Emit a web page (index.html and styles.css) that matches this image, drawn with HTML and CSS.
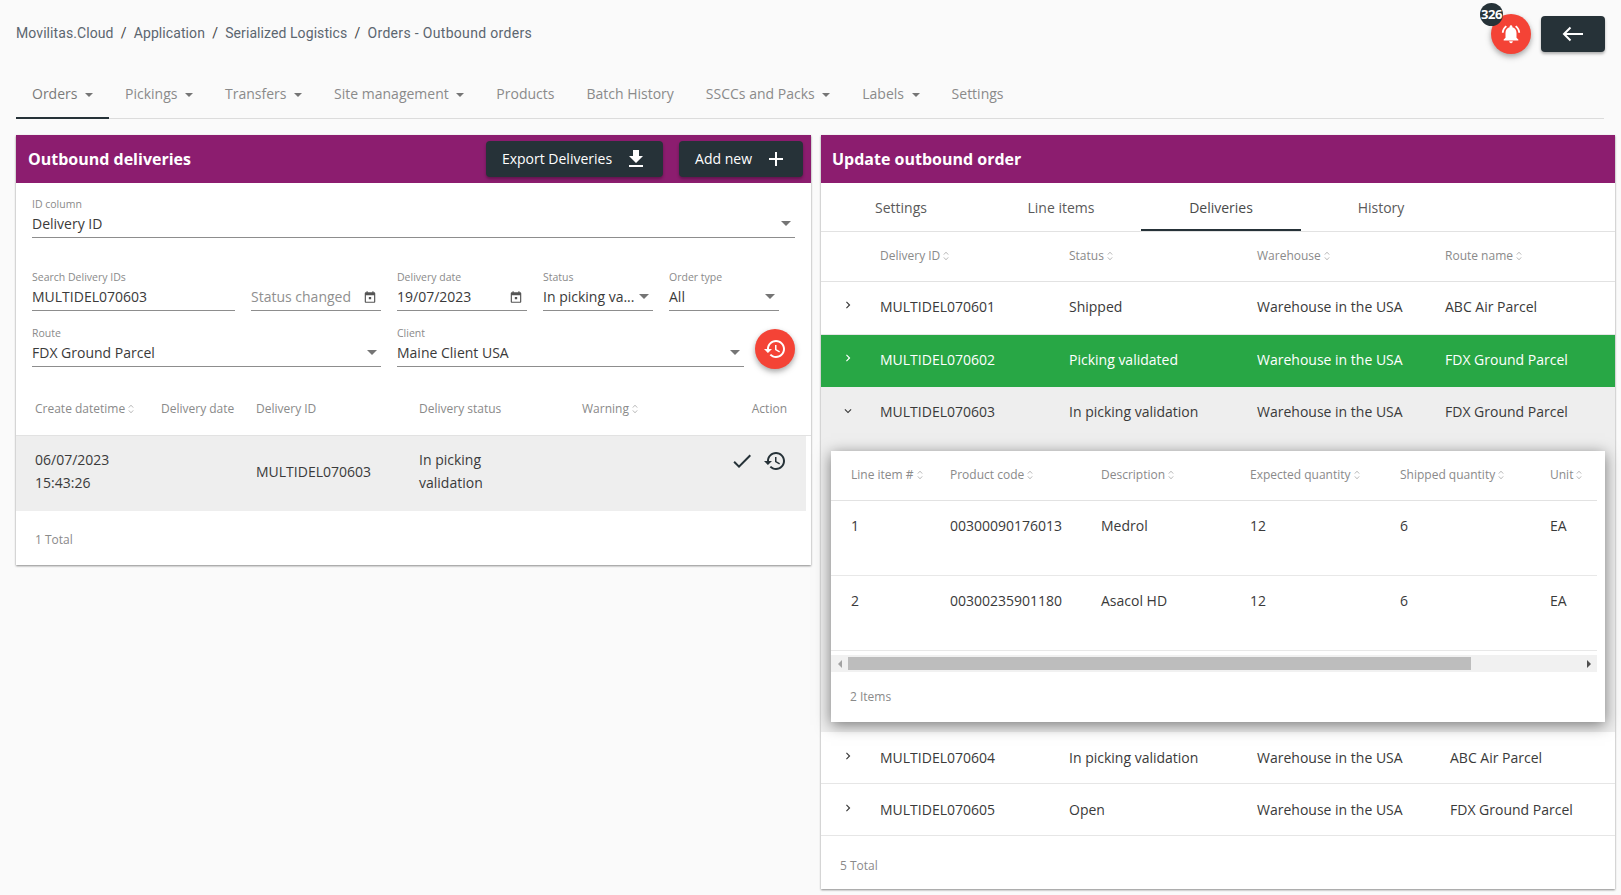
FILE: index.html
```html
<!DOCTYPE html>
<html lang="en">
<head>
<meta charset="utf-8">
<title>Orders - Outbound orders</title>
<link rel="stylesheet" href="styles.css">
</head>
<body>
<svg class="defs" width="0" height="0" aria-hidden="true">
  <symbol id="i-download" viewBox="0 0 24 24"><path d="M19 9h-4V3H9v6H5l7 7 7-7zM5 18v2h14v-2H5z"/></symbol>
  <symbol id="i-add" viewBox="0 0 24 24"><path d="M19 13h-6v6h-2v-6H5v-2h6V5h2v6h6v2z"/></symbol>
  <symbol id="i-history" viewBox="0 0 24 24"><path d="M13 3c-4.97 0-9 4.03-9 9H1l3.89 3.89.07.14L9 12H6c0-3.87 3.13-7 7-7s7 3.13 7 7-3.13 7-7 7c-1.93 0-3.68-.79-4.94-2.06l-1.42 1.42C8.27 19.99 10.51 21 13 21c4.97 0 9-4.03 9-9s-4.03-9-9-9zm-1 5v5l4.28 2.54.72-1.21-3.5-2.08V8H12z"/></symbol>
  <symbol id="i-check" viewBox="0 0 24 24"><path d="M9 16.17L4.83 12l-1.42 1.41L9 19 21 7l-1.41-1.41z"/></symbol>
  <symbol id="i-back" viewBox="0 0 24 24"><path d="M22 12H3M9.5 5.5L3 12l6.5 6.5" fill="none" stroke="currentColor" stroke-width="2"/></symbol>
  <symbol id="i-bell" viewBox="0 0 24 24"><path d="M7.58 4.08L6.15 2.65C3.75 4.48 2.17 7.3 2.03 10.5h2c.15-2.65 1.51-4.97 3.55-6.42zm12.39 6.42h2c-.15-3.2-1.73-6.02-4.12-7.85l-1.42 1.43c2.02 1.45 3.39 3.77 3.54 6.42zM18 11c0-3.07-1.64-5.64-4.5-6.32V4c0-.83-.67-1.5-1.5-1.5s-1.5.67-1.5 1.5v.68C7.63 5.36 6 7.92 6 11v5l-2 2v1h16v-1l-2-2v-5zm-6 11c.14 0 .27-.01.4-.04.65-.14 1.18-.58 1.44-1.18.1-.24.15-.5.15-.78h-4c.01 1.1.9 2 2.01 2z"/></symbol>
  <symbol id="i-event" viewBox="0 0 24 24"><path d="M19 4h-1V2h-2v2H8V2H6v2H5c-1.11 0-1.99.9-1.99 2L3 20c0 1.1.89 2 2 2h14c1.1 0 2-.9 2-2V6c0-1.1-.9-2-2-2zm0 16H5V9h14v11zM10 12h4v4h-4z"/></symbol>
  <symbol id="i-right" viewBox="0 0 24 24"><path d="M10 6L8.59 7.41 13.17 12l-4.58 4.59L10 18l6-6z"/></symbol>
  <symbol id="i-down" viewBox="0 0 24 24"><path d="M16.59 8.59L12 13.17 7.41 8.59 6 10l6 6 6-6z"/></symbol>
  <symbol id="i-sort" viewBox="0 0 6 10"><path d="M.8 3.6L3 1.2l2.2 2.4M.8 6.4L3 8.8l2.2-2.4" fill="none" stroke="currentColor" stroke-width=".9"/></symbol>
</svg>

<header class="topbar">
  <nav class="crumbs">
    <span>Movilitas.Cloud</span><i>/</i><span>Application</span><i>/</i><span>Serialized Logistics</span><i>/</i><span class="crumb-last">Orders - Outbound orders</span>
  </nav>
  <div class="top-actions">
    <div class="bell-wrap">
      <span class="badge">326</span>
      <button class="fab"><svg class="ic-22"><use href="#i-bell"/></svg></button>
    </div>
    <button class="back"><svg class="ic-24"><use href="#i-back"/></svg></button>
  </div>
</header>

<nav class="mainnav">
  <a class="nav-item active">Orders<b class="caret"></b></a>
  <a class="nav-item">Pickings<b class="caret"></b></a>
  <a class="nav-item">Transfers<b class="caret"></b></a>
  <a class="nav-item">Site management<b class="caret"></b></a>
  <a class="nav-item">Products</a>
  <a class="nav-item">Batch History</a>
  <a class="nav-item">SSCCs and Packs<b class="caret"></b></a>
  <a class="nav-item">Labels<b class="caret"></b></a>
  <a class="nav-item">Settings</a>
</nav>

<main class="panels">
  <section class="panel panel-left">
    <div class="panel-head">
      <h2>Outbound deliveries</h2>
      <div class="head-actions">
        <button class="btn">Export Deliveries<svg class="ic-24"><use href="#i-download"/></svg></button>
        <button class="btn">Add new<svg class="ic-24"><use href="#i-add"/></svg></button>
      </div>
    </div>

    <div class="form">
      <div class="form-row r1">
        <div class="field f-full"><label>ID column</label><div class="val">Delivery ID<b class="arrow"></b></div></div>
      </div>
      <div class="form-row r2">
        <div class="field f-search"><label>Search Delivery IDs</label><div class="val">MULTIDEL070603</div></div>
        <div class="field f-date"><label>&nbsp;</label><div class="val muted">Status changed<svg class="ic-cal"><use href="#i-event"/></svg></div></div>
        <div class="field f-date"><label>Delivery date</label><div class="val">19/07/2023<svg class="ic-cal"><use href="#i-event"/></svg></div></div>
        <div class="field f-small"><label>Status</label><div class="val">In picking va...<b class="arrow"></b></div></div>
        <div class="field f-small"><label>Order type</label><div class="val">All<b class="arrow"></b></div></div>
      </div>
      <div class="form-row r3">
        <div class="field f-route"><label>Route</label><div class="val">FDX Ground Parcel<b class="arrow"></b></div></div>
        <div class="field f-client"><label>Client</label><div class="val">Maine Client USA<b class="arrow"></b></div></div>
        <button class="fab fab-form"><svg class="ic-24"><use href="#i-history"/></svg></button>
      </div>
    </div>

    <div class="lt-row lt-head">
      <span>Create datetime<svg class="sort"><use href="#i-sort"/></svg></span>
      <span>Delivery date</span>
      <span>Delivery ID</span>
      <span>Delivery status</span>
      <span>Warning<svg class="sort"><use href="#i-sort"/></svg></span>
      <span class="end">Action</span>
    </div>
    <div class="lt-row lt-data">
      <span>06/07/2023<br>15:43:26</span>
      <span></span>
      <span>MULTIDEL070603</span>
      <span>In picking<br>validation</span>
      <span></span>
      <span class="row-actions">
        <svg class="ic-24"><use href="#i-check"/></svg>
        <svg class="ic-24"><use href="#i-history"/></svg>
      </span>
    </div>
    <div class="foot foot-left">1 Total</div>
  </section>

  <section class="panel panel-right">
    <div class="panel-head"><h2>Update outbound order</h2></div>
    <div class="tabs">
      <a class="tab">Settings</a>
      <a class="tab">Line items</a>
      <a class="tab active">Deliveries</a>
      <a class="tab">History</a>
    </div>

    <div class="rt-row rt-head">
      <span></span>
      <span>Delivery ID<svg class="sort"><use href="#i-sort"/></svg></span>
      <span>Status<svg class="sort"><use href="#i-sort"/></svg></span>
      <span>Warehouse<svg class="sort"><use href="#i-sort"/></svg></span>
      <span>Route name<svg class="sort"><use href="#i-sort"/></svg></span>
    </div>
    <div class="rt-row rt-data shipped">
      <svg class="chev"><use href="#i-right"/></svg>
      <span>MULTIDEL070601</span><span>Shipped</span><span>Warehouse in the USA</span><span>ABC Air Parcel</span>
    </div>
    <div class="rt-row rt-data green">
      <svg class="chev"><use href="#i-right"/></svg>
      <span>MULTIDEL070602</span><span>Picking validated</span><span>Warehouse in the USA</span><span>FDX Ground Parcel</span>
    </div>
    <div class="rt-row rt-data open">
      <svg class="chev"><use href="#i-down"/></svg>
      <span>MULTIDEL070603</span><span>In picking validation</span><span>Warehouse in the USA</span><span>FDX Ground Parcel</span>
    </div>

    <div class="expansion">
      <div class="card">
        <div class="nt-row nt-head">
          <span>Line item #<svg class="sort"><use href="#i-sort"/></svg></span>
          <span>Product code<svg class="sort"><use href="#i-sort"/></svg></span>
          <span>Description<svg class="sort"><use href="#i-sort"/></svg></span>
          <span>Expected quantity<svg class="sort"><use href="#i-sort"/></svg></span>
          <span>Shipped quantity<svg class="sort"><use href="#i-sort"/></svg></span>
          <span>Unit<svg class="sort"><use href="#i-sort"/></svg></span>
        </div>
        <div class="nt-row nt-data">
          <span>1</span><span>00300090176013</span><span>Medrol</span><span>12</span><span>6</span><span>EA</span>
        </div>
        <div class="nt-row nt-data">
          <span>2</span><span>00300235901180</span><span>Asacol HD</span><span>12</span><span>6</span><span>EA</span>
        </div>
        <div class="scrollbar">
          <b class="sb-left"></b>
          <div class="sb-track"><div class="sb-thumb"></div></div>
          <b class="sb-right"></b>
        </div>
        <div class="foot foot-card">2 Items</div>
      </div>
    </div>

    <div class="rt-row rt-data after">
      <svg class="chev"><use href="#i-right"/></svg>
      <span>MULTIDEL070604</span><span>In picking validation</span><span>Warehouse in the USA</span><span>ABC Air Parcel</span>
    </div>
    <div class="rt-row rt-data after">
      <svg class="chev"><use href="#i-right"/></svg>
      <span>MULTIDEL070605</span><span>Open</span><span>Warehouse in the USA</span><span>FDX Ground Parcel</span>
    </div>
    <div class="foot foot-right">5 Total</div>
  </section>
</main>
</body>
</html>
```

FILE: styles.css
```css
* { box-sizing: border-box; }
html, body { height: 895px; overflow: hidden; }
body {
  margin: 0;
  padding: 0 6px 0 16px;
  background: #fafafa;
  color: #3a3a3a;
  font-family: "Open Sans", "Liberation Sans", sans-serif;
  font-size: 14px;
}
svg { fill: currentColor; display: block; flex: none; }
.defs { position: absolute; }
button { font-family: inherit; border: 0; cursor: pointer; padding: 0; }

.ic-22 { width: 22px; height: 22px; }
.ic-24 { width: 24px; height: 24px; }

/* top bar */
.topbar {
  height: 70px;
  padding-right: 10px;
  display: flex;
  justify-content: space-between;
  align-items: flex-start;
}
.crumbs {
  margin-top: 24px;
  font-family: Roboto, "Liberation Sans", sans-serif;
  font-size: 14px;
  line-height: 18px;
  letter-spacing: .08px;
  color: #5c6670;
  display: flex;
}
.crumbs i { font-style: normal; padding: 0 7.2px; color: #444; }
.crumb-last { letter-spacing: .32px; }
.top-actions { display: flex; gap: 10px; align-items: flex-start; }
.bell-wrap { position: relative; margin-top: 14px; }
.fab {
  width: 40px;
  height: 40px;
  border-radius: 50%;
  background: #f44336;
  color: #fff;
  display: flex;
  align-items: center;
  justify-content: center;
  box-shadow: 0 3px 6px rgba(0,0,0,.25), 0 2px 4px rgba(0,0,0,.12);
}
.badge {
  position: absolute;
  left: -11px;
  top: -11px;
  width: 23px;
  height: 23px;
  border-radius: 50%;
  background: #263238;
  color: #fff;
  font-size: 13px;
  font-weight: 700;
  line-height: 23px;
  text-align: center;
  letter-spacing: -.5px;
  z-index: 1;
}
.back {
  width: 64px;
  height: 36px;
  margin-top: 16px;
  border-radius: 4px;
  background: #263238;
  color: #fff;
  display: flex;
  align-items: center;
  justify-content: center;
  box-shadow: 0 2px 3px rgba(0,0,0,.3);
}

/* main nav */
.mainnav {
  height: 49px;
  margin-right: 11px;
  border-bottom: 1px solid #dcdcdc;
  display: flex;
}
.nav-item {
  height: 49px;
  padding: 0 16px 3px;
  display: flex;
  align-items: center;
  color: #8a8a8a;
  font-size: 14px;
}
.nav-item.active { color: #7a7a7a; border-bottom: 2px solid #263238; padding-bottom: 1px; }
.caret {
  width: 0;
  height: 0;
  margin: 3px 0 0 7.6px;
  border: 4px solid transparent;
  border-bottom: 0;
  border-top-color: #757575;
}

/* panels */
.panels {
  margin-top: 16px;
  display: grid;
  grid-template-columns: 795px 794px;
  column-gap: 10px;
  align-items: start;
}
.panel {
  background: #fff;
  box-shadow: 0 1px 2px rgba(0,0,0,.45);
}
.panel-head {
  height: 48px;
  padding: 0 8px 0 12px;
  background: #8c1d6f;
  color: #fff;
  display: flex;
  align-items: center;
  justify-content: space-between;
}
.panel-right .panel-head { padding-left: 11px; }
.panel-head h2 { margin: 0; font-size: 16px; font-weight: 700; }
.head-actions { display: flex; gap: 16px; }
.btn {
  height: 36px;
  padding: 0 15px 1px 16px;
  background: #263238;
  color: #fff;
  border-radius: 4px;
  font-size: 14px;
  display: flex;
  align-items: center;
  gap: 12px;
  box-shadow: 0 2px 3px rgba(0,0,0,.3);
}

/* form */
.form { padding: 14px 16px 0; }
.form-row { display: flex; }
.r2 { margin-top: 32px; gap: 16px; }
.r3 { margin-top: 15px; gap: 16px; }
.field { height: 41px; }
.field label {
  display: block;
  height: 14px;
  font-size: 10.5px;
  line-height: 14px;
  color: #8a8a8a;
}
.val {
  height: 27px;
  border-bottom: 1px solid #8d8d8d;
  display: flex;
  align-items: center;
  justify-content: space-between;
  padding-bottom: 1px;
  font-size: 14px;
  color: #3a3a3a;
  white-space: nowrap;
}
.muted { color: #8f8f8f; }
.f-full { width: 763px; }
.f-search { width: 203px; }
.f-date { width: 130px; }
.f-small { width: 110px; }
.f-route { width: 349px; }
.f-client { width: 347px; }
.arrow {
  width: 0;
  height: 0;
  margin-right: 4px;
  border: 5px solid transparent;
  border-bottom: 0;
  border-top-color: #757575;
}
.ic-cal { width: 14px; height: 14px; color: #555; margin-right: 4px; }
.fab-form { margin: 3px 0 0 -5px; }

/* left table */
.lt-row {
  display: grid;
  grid-template-columns: 126px 95px 163px 163px 1fr 80px;
  padding: 0 24px 0 19px;
  align-items: center;
}
.lt-head {
  height: 51px;
  margin-top: 16px;
  padding-bottom: 3px;
  border-bottom: 1px solid #e2e2e2;
  color: #8a8a8a;
  font-size: 12px;
  white-space: nowrap;
}
.lt-head span, .rt-head span, .nt-head span { display: flex; align-items: center; gap: 3px; }
.lt-head .end { justify-content: flex-end; }
.lt-data {
  width: 790px;
  height: 75px;
  padding-right: 19px;
  padding-bottom: 5px;
  background: #eee;
  font-size: 14px;
  line-height: 23px;
  color: #3a3a3a;
}
.row-actions { display: flex; justify-content: flex-end; gap: 9px; margin-top: -20px; color: #263238; }
.sort { width: 6px; height: 10px; color: #b0b0b0; fill: none; }

.foot { font-size: 12px; color: #8a8a8a; display: flex; }
.foot-left { height: 54px; padding: 20px 0 0 19px; line-height: 18px; }

/* right panel */
.tabs { height: 49px; display: flex; border-bottom: 1px solid #e2e2e2; }
.tab {
  width: 160px;
  height: 48px;
  display: flex;
  align-items: center;
  justify-content: center;
  color: #5a5a5a;
  font-size: 14px;
}
.tab.active { border-bottom: 2px solid #263238; padding-top: 2px; color: #4a4a4a; }

.rt-row {
  display: grid;
  grid-template-columns: 59px 189px 188px 188px 1fr;
  align-items: center;
  white-space: nowrap;
}
.rt-head {
  height: 50px;
  padding-bottom: 2px;
  border-bottom: 1px solid #e2e2e2;
  color: #8a8a8a;
  font-size: 12px;
}
.rt-data { height: 53px; border-bottom: 1px solid #e6e6e6; color: #3a3a3a; font-size: 14px; }
.rt-data.shipped { padding-bottom: 4px; }
.rt-data.green { height: 52px; background: #28a745; color: #fff; border-bottom: 0; padding-bottom: 3px; }
.rt-data.open { height: 54px; background: #eee; border-bottom: 0; padding-bottom: 5px; }
.rt-data.after { height: 52px; grid-template-columns: 59px 189px 188px 193px 1fr; }
.chev { width: 14px; height: 14px; margin: -4px 0 0 20px; }
.shipped .chev, .open .chev { margin-top: -2px; }

/* nested card */
.expansion { height: 291px; padding: 10px; background: #eee; }
.card {
  width: 774px;
  height: 271px;
  background: #fff;
  box-shadow: 0 3px 14px rgba(0,0,0,.5);
}
.nt-row {
  width: 766px;
  display: grid;
  grid-template-columns: 99px 151px 149px 150px 150px 1fr;
  padding-left: 20px;
  white-space: nowrap;
}
.nt-head {
  height: 50px;
  border-bottom: 1px solid #e2e2e2;
  align-items: center;
  color: #8a8a8a;
  font-size: 12px;
  padding-bottom: 2px;
}
.nt-data {
  height: 75px;
  padding-top: 15px;
  border-bottom: 1px solid #e8e8e8;
  font-size: 14px;
  line-height: 20px;
  color: #3a3a3a;
}
.scrollbar {
  width: 766px;
  height: 17px;
  margin-top: 4px;
  background: #f1f1f1;
  display: flex;
  align-items: center;
}
.sb-track { flex: 1; height: 13px; }
.sb-thumb { width: 623px; height: 13px; background: #bdbdbd; }
.sb-left, .sb-right { width: 17px; display: flex; justify-content: center; }
.sb-left::before, .sb-right::before {
  content: "";
  border: 4px solid transparent;
}
.sb-left::before { border-left: 0; border-right-color: #a3a3a3; }
.sb-right::before { border-right: 0; border-left-color: #505050; }
.foot-card { height: 50px; padding: 16px 0 0 19px; line-height: 18px; }
.foot-right { height: 53px; padding: 21px 0 0 19px; line-height: 18px; }
```
